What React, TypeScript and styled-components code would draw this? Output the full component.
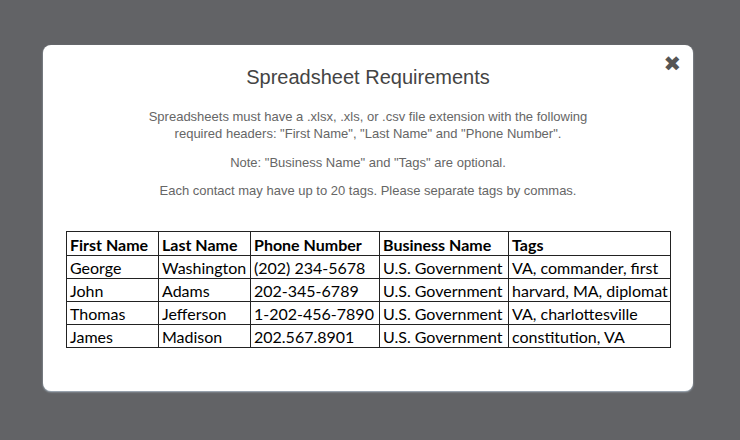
import React from "react";
import styled, { createGlobalStyle } from "styled-components";

const Global = createGlobalStyle`
  html, body { margin: 0; padding: 0; }
  body {
    width: 740px;
    height: 440px;
    background: #626366;
    font-family: "Liberation Sans", Arial, sans-serif;
    overflow: hidden;
  }
`;

const Page = styled.div`
  padding: 45px 0 0 43px;
`;

const Modal = styled.div`
  position: relative;
  box-sizing: border-box;
  width: 650px;
  height: 346px;
  background: #fff;
  border-radius: 8px;
  box-shadow: 0 1px 2px rgba(180, 195, 210, 0.9);
  padding: 20px 23px 0 23px;
  display: flex;
  flex-direction: column;
  align-items: center;
`;

const Close = styled.button`
  position: absolute;
  top: 9px;
  right: 12px;
  border: 0;
  background: none;
  padding: 0;
  color: #555;
  font-size: 21px;
  line-height: 1;
  cursor: pointer;
  font-family: "DejaVu Sans", sans-serif;
`;

const Title = styled.h2`
  margin: 0;
  font-size: 20px;
  font-weight: normal;
  color: #444;
  line-height: 24px;
`;

const Para = styled.p<{ $mt: number }>`
  margin: ${(p) => p.$mt}px 0 0 0;
  font-size: 13px;
  line-height: 17px;
  color: #666;
  text-align: center;
`;

const Table = styled.table`
  margin-top: 32px;
  align-self: flex-start;
  width: 604px;
  table-layout: fixed;
  border-collapse: collapse;
  font-family: "Lato", "Open Sans", sans-serif;
  font-size: 16px;
  color: #000;
`;

const Col = styled.col<{ $w: number }>`
  width: ${(p) => p.$w}px;
`;

const Th = styled.th`
  border: 1px solid #222;
  text-align: left;
  font-weight: bold;
  padding: 1px 3px 0;
  height: 22px;
  white-space: nowrap;
  overflow: visible;
`;

const Td = styled.td`
  border: 1px solid #222;
  padding: 1px 3px 0;
  height: 21px;
  white-space: nowrap;
  overflow: visible;
`;

const rows = [
  ["George", "Washington", "(202) 234-5678", "U.S. Government", "VA, commander, first"],
  ["John", "Adams", "202-345-6789", "U.S. Government", "harvard, MA, diplomat"],
  ["Thomas", "Jefferson", "1-202-456-7890", "U.S. Government", "VA, charlottesville"],
  ["James", "Madison", "202.567.8901", "U.S. Government", "constitution, VA"],
];

const widths = [92, 92, 129, 129, 162];

export default function App() {
  return (
    <>
      <Global />
      <Page>
        <Modal>
          <Close aria-label="Close">✖</Close>
          <Title>Spreadsheet Requirements</Title>
          <Para $mt={19}>
            Spreadsheets must have a .xlsx, .xls, or .csv file extension with the following
            <br />
            required headers: "First Name", "Last Name" and "Phone Number".
          </Para>
          <Para $mt={12}>Note: "Business Name" and "Tags" are optional.</Para>
          <Para $mt={11}>Each contact may have up to 20 tags. Please separate tags by commas.</Para>
          <Table>
            <colgroup>
              {widths.map((w, i) => (
                <Col key={i} $w={w} />
              ))}
            </colgroup>
            <thead>
              <tr>
                <Th>First Name</Th>
                <Th>Last Name</Th>
                <Th>Phone Number</Th>
                <Th>Business Name</Th>
                <Th>Tags</Th>
              </tr>
            </thead>
            <tbody>
              {rows.map((r, i) => (
                <tr key={i}>
                  {r.map((c, j) => (
                    <Td key={j}>{c}</Td>
                  ))}
                </tr>
              ))}
            </tbody>
          </Table>
        </Modal>
      </Page>
    </>
  );
}
